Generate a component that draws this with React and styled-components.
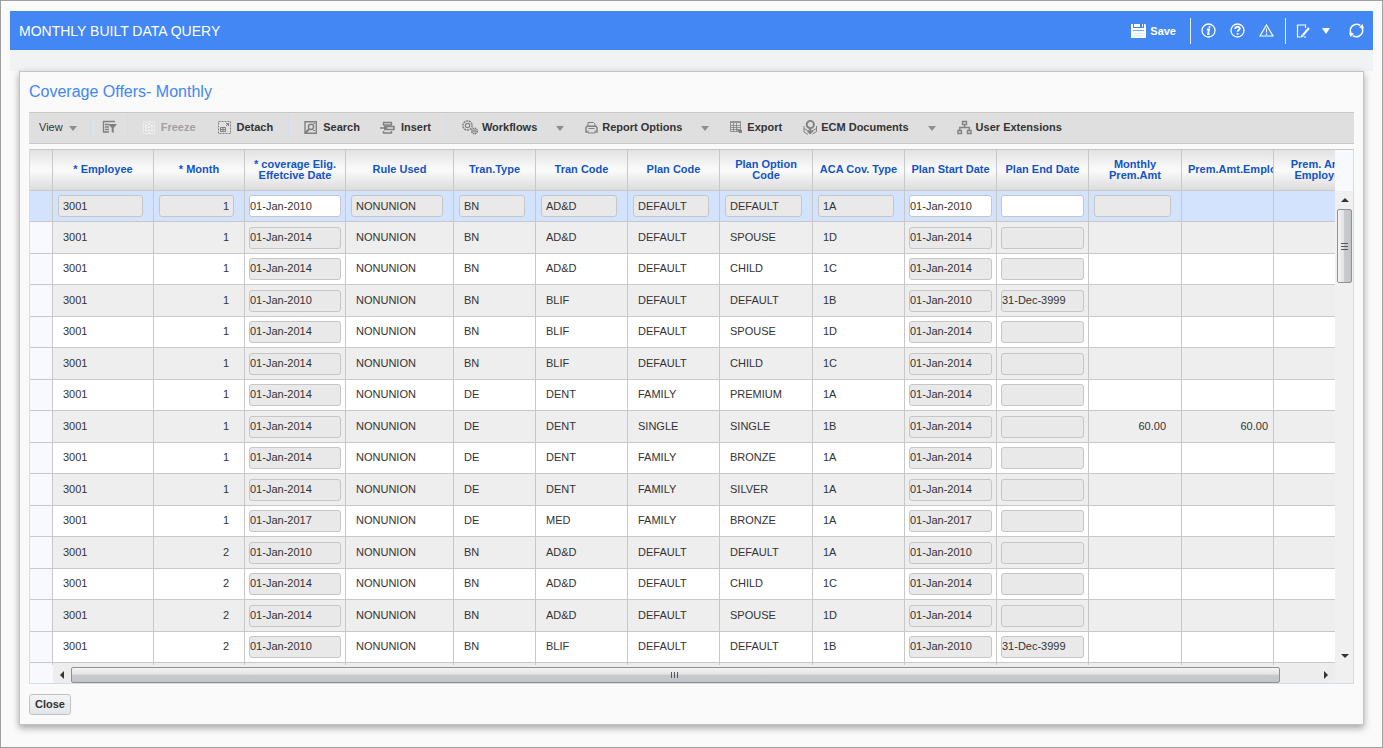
import React from 'react';
import styled, { createGlobalStyle, css } from 'styled-components';

const GlobalStyle = createGlobalStyle`
  *, *::before, *::after { box-sizing: border-box; }
  body {
    margin: 0;
    background: #fafafa;
    color: #333;
    font: 11px/14px "Liberation Sans", Arial, sans-serif;
  }
  button, input { font: inherit; color: inherit; }
`;

const Frame = styled.div`
  min-height: 100vh;
  padding: 10px 9px 20px;
  border: 1px solid #a0a0a0;
`;

const Banner = styled.header`
  display: flex;
  align-items: center;
  height: 39px;
  padding: 0 9px;
  background: #4387f4;
  color: #fff;
`;

const BannerTitle = styled.h1`
  flex: 1;
  margin: 0;
  font-size: 14px;
  line-height: 20px;
  font-weight: 400;
`;

const BannerGroup = styled.div`
  display: flex;
  align-items: center;
  gap: ${(p) => p.$gap || 14}px;
  height: 26px;
  padding: 0 ${(p) => p.$end || 11}px 0 10px;
  border-left: ${(p) => (p.$divided ? '1px solid #e6effd' : '0')};
  &:last-child { padding-right: 0; }
`;

const SplitButton = styled.div`
  display: flex;
  align-items: center;
  gap: 12px;
`;

const BannerButton = styled.button`
  display: flex;
  align-items: center;
  gap: 4px;
  padding: 0;
  border: 0;
  background: none;
  color: #fff;
  font-weight: 700;
  svg { display: block; }
`;

const Main = styled.main`
  padding: 21px 9px 0;
  background: linear-gradient(#f1f2f4 21px, transparent 21px);
`;

const Panel = styled.section`
  padding: 10px 9px 9px;
  border: 1px solid #c4c4c4;
  background: #fafafa;
  box-shadow: 0 3px 7px rgba(0, 0, 0, 0.35);
`;

const PanelTitle = styled.h2`
  margin: 0 0 10px;
  color: #4387f4;
  font-size: 16px;
  line-height: 20px;
  font-weight: 400;
`;

const Toolbar = styled.div`
  display: flex;
  align-items: center;
  height: 32px;
  margin-bottom: 5px;
  padding: 0 10px 2px;
  border: solid #c8c8c8;
  border-width: 1px 0;
  background: #dfdfdf;
`;

const ToolGroup = styled.div`
  display: flex;
  align-items: center;
  height: 24px;
  gap: ${(p) => p.$gap || 22}px;
  padding: 0 ${(p) => p.$end || 0}px 0 ${(p) => p.$start || 0}px;
  border-left: ${(p) => (p.$start ? '1px solid #d3dde6' : '0')};
`;

const ToolButton = styled.button`
  display: flex;
  align-items: center;
  gap: ${(p) => p.$gap || 6}px;
  padding: 0;
  border: 0;
  background: none;
  color: #333;
  font-weight: ${(p) => (p.$plain ? 400 : 700)};
  white-space: nowrap;
  &:disabled { color: #a0a0a0; }
  svg { display: block; color: #808080; }
  &:disabled svg { color: #f0f0f0; }
`;

const Caret = styled.span`
  border: 4px solid transparent;
  border-top: 5px solid #8b8f92;
  border-bottom: 0;
  margin: 3px 0 0 ${(p) => p.$space || 0}px;
`;

const Grid = styled.div`
  display: grid;
  grid-template-columns: minmax(0, 1fr) 18px;
  grid-template-rows: 515px 18px;
  border: 1px solid #d5dde5;
  border-top-color: #c8c8c8;
`;

const Viewport = styled.div`
  overflow: hidden;
`;

const Table = styled.table`
  table-layout: fixed;
  width: 1336px;
  border-collapse: separate;
  border-spacing: 0;
`;

const HeadCell = styled.th`
  height: 41px;
  padding: ${(p) => (p.$clip ? '0 0 1px 6px' : '0 4px 1px')};
  overflow: hidden;
  border: solid #c8c8c8;
  border-width: 0 1px 1px 0;
  background: linear-gradient(#e2e2e2, #fbfbfb 50%, #dcdcdc);
  color: #1254c4;
  line-height: 11px;
  font-weight: 700;
  text-align: ${(p) => (p.$clip ? 'left' : 'center')};
  white-space: pre;
`;

const cellPadding = (p) => {
  if (p.$boxed) return '0 10px 0 5px';
  if (p.$kind === 'date') return '0 4px';
  if (p.$kind === 'total') return '0 5px 2px';
  return '0 15px 2px 10px';
};

const BodyCell = styled.td`
  height: inherit;
  padding: ${cellPadding};
  border: solid #c8c8c8;
  border-width: 0 1px 1px 0;
  text-align: ${(p) => (p.$num ? 'right' : 'left')};
  white-space: nowrap;
`;

const Field = styled.input`
  display: block;
  width: 100%;
  height: 22px;
  padding: ${(p) => (p.$date ? '0 0 2px' : '0 4px')};
  border: 1px solid #c6c6c6;
  border-radius: 3px;
  background: ${(p) => (p.readOnly ? '#e9e9e9' : '#fff')};
  text-align: ${(p) => (p.$num ? 'right' : 'left')};
  outline: 0;
`;

const Row = styled.tr`
  height: 31px;
  background: #fff;
  &:nth-child(even) { height: 32px; background: #eee; }
  td:first-child { background: #f7f9fe; padding: 0; }
  ${(p) => p.$selected && css`
    &, td:first-child { background: #d3e3fd; }
    ${Field} { padding-bottom: 0; }
  `}
`;

const VScroll = styled.div`
  display: flex;
  flex-direction: column;
  padding: 41px 0 0 2px;
  background: linear-gradient(#f7f9fe 41px, #f0f0f0 41px);
`;

const HScroll = styled.div`
  display: flex;
  padding: 2px 0 0 23px;
  background: linear-gradient(90deg, #f7f9fe 23px, #ededed 23px);
`;

const ScrollCorner = styled.div`
  background: #f0f0f0;
`;

const ScrollArrow = styled.button`
  display: flex;
  align-items: center;
  justify-content: center;
  flex: none;
  width: ${(p) => (p.$wide ? 18 : 15)}px;
  height: ${(p) => (p.$wide ? 16 : 18)}px;
  padding: 0;
  border: 0;
  background: none;
`;

const ScrollTrack = styled.div`
  display: flex;
  flex: 1;
  flex-direction: ${(p) => (p.$vertical ? 'column' : 'row')};
`;

const ScrollThumb = styled.div`
  display: flex;
  align-items: center;
  justify-content: center;
  border: 1px solid #8f9093;
  border-radius: 2px;
  ${(p) => (p.$vertical
    ? css`width: 15px; height: 17%; background: linear-gradient(90deg, #f4f4f4, #e2e2e4 45%, #c9cacd 50%, #c3c4c8);`
    : css`width: 97%; height: 16px; background: linear-gradient(#f4f4f4, #e2e2e4 45%, #c9cacd 50%, #c3c4c8);`)}
`;

const CloseButton = styled.button`
  display: block;
  height: 21px;
  margin-top: 10px;
  padding: 0 5px 1px;
  border: 1px solid #c0c3c6;
  border-radius: 3px;
  background: linear-gradient(#f3f4f6, #e2e6ea);
  font-weight: 700;
`;

const Svg = ({ w = 14, h = w, children, ...rest }) => (
  <svg width={w} height={h} viewBox={`0 0 ${w} ${h}`} fill="none" stroke="currentColor" aria-hidden="true" {...rest}>
    {children}
  </svg>
);

const SaveIcon = () => (
  <Svg w={15} h={14} stroke="none" fill="currentColor">
    <path d="M0 0h2v4h11V0h1l1 1v13H0zM3 0h6v3H3zM11 0h1v3h-1z" />
    <path d="M2 6.500h11" stroke="#7cabf7" />
    <path d="M3 9.500h9M3 11.500h9" stroke="#dbe8fd" />
  </Svg>
);
const InfoIcon = () => (
  <Svg w={15}>
    <circle cx="7.500" cy="7.500" r="6.500" strokeWidth="1.300" />
    <path d="M6 6.500h2l-1 4.500h1.500" strokeWidth="1.800" />
    <circle cx="8.500" cy="4" r="1" fill="currentColor" stroke="none" />
  </Svg>
);
const HelpIcon = () => (
  <Svg w={15}>
    <circle cx="7.500" cy="7.500" r="6.500" strokeWidth="1.300" />
    <path d="M5.200 6c0-3 4.600-2.800 4.600-.4 0 1.500-2.200 1.500-2.200 3.200M7.600 10v1.800" strokeWidth="1.800" />
  </Svg>
);
const WarnIcon = () => (
  <Svg w={15} h={13}>
    <path d="M7.500 1 14 12H1zM7.500 4.500v4M7.500 9.500V11" strokeWidth="1.200" />
  </Svg>
);
const EditIcon = () => (
  <Svg w={14}>
    <path d="M9.500 4V1h-8v12h3" strokeWidth="1.200" />
    <path d="m13 4-6 7" strokeWidth="2" />
    <path d="m4.500 13.800 1-3.500 2.500 2z" fill="currentColor" stroke="none" />
    <path d="M8 13h2" />
  </Svg>
);
const DropIcon = () => (
  <Svg w={8} h={6} stroke="none" fill="currentColor"><path d="M0 0h8L4 6z" /></Svg>
);
const RefreshIcon = () => (
  <Svg w={15}>
    <path d="M2.600 11.200A6.200 6.200 0 0 1 5.200 1.700a6.200 6.200 0 0 1 6 .7M12.400 3.800a6.200 6.200 0 0 1-2.600 9.500 6.200 6.200 0 0 1-6-.7" strokeWidth="1.500" />
    <path d="M0 9.500 5 10.500 1.500 14zM15 5.500l-5-1L13.500 1z" fill="currentColor" stroke="none" />
  </Svg>
);

const FilterIcon = () => (
  <Svg w={15}>
    <path d="M1 1.500h12M1.500 1v11M1 12H7M3 4.500h4M3 7h4M3 9.500h4" strokeWidth="1.400" />
    <path d="M6 4h9l-3.300 4v5l-2-1V8z" fill="currentColor" stroke="none" />
  </Svg>
);
const FreezeIcon = () => (
  <Svg w={12} h={13}>
    <path d="M.5 1v11.500h11V1M0 1h12" stroke="#ececec" />
    <path d="M2 4.500h2M2 7h2M2 9.500h2M8 4.500h2M8 7h2M8 9.500h2" stroke="#fff" />
    <path d="M6 2v10" stroke="#fff" strokeDasharray="2 1" />
  </Svg>
);
const DetachIcon = () => (
  <Svg w={13}>
    <path d="M.5.5h12v12H.5z" strokeDasharray="2 1" />
    <path d="M2.500 6.500h5v4h-5zM2.500 8.500h5M5 6.500v4M8 5l2.500-2.500M8 2.500h2.500V5" />
  </Svg>
);
const SearchIcon = () => (
  <Svg w={13}>
    <path d="M1 .7h11.300v11.600H1z" strokeWidth="1.400" />
    <circle cx="7" cy="5.800" r="2.600" strokeWidth="1.500" />
    <path d="m5 8-4 4.500" strokeWidth="2" />
    <path d="M9 9.500h2M9.500 2.500H11" />
  </Svg>
);
const InsertIcon = () => (
  <Svg w={15} h={13}>
    <path d="M3 1.500h9M3.500 1v3h8V1" strokeWidth="1.400" />
    <path d="M5 5.500h9v3H5M0 7h5" strokeWidth="1.500" />
    <path d="m4 4.500 4 2.500-4 2.500z" fill="currentColor" stroke="none" />
    <path d="M3.500 10v2h8v-2" strokeWidth="1.400" />
  </Svg>
);
const GearsIcon = () => (
  <Svg w={16} h={15}>
    <circle cx="5.500" cy="5.500" r="4.600" strokeDasharray="2 .8" strokeWidth="1.500" />
    <circle cx="5.500" cy="5.500" r="2.200" strokeWidth="1.200" />
    <circle cx="12.500" cy="11" r="2.700" strokeDasharray="1.500 .6" strokeWidth="1.700" />
    <circle cx="12.500" cy="11" r="1" />
  </Svg>
);
const PrinterIcon = () => (
  <Svg w={13}>
    <path d="M3 5V1.500h5.500L10 3v2M3 9.500v2.500h7V9.500M3.500 7.500h6" />
    <path d="M2.500 11H1V6.500l1-1.200h9l1 1.200V11h-1.500" strokeWidth="1.400" />
  </Svg>
);
const ExportIcon = () => (
  <Svg w={13} h={12}>
    <path d="M.5.500h10v10H.5zM0 1.500h11M.5 4.500h10M.5 6.500h10M.5 8.500h7M3.500 2v8.500M6.500 2v8.500" strokeWidth=".8" />
    <path d="M6.500 7.500 12 9v3H9z" fill="currentColor" stroke="none" />
  </Svg>
);
const EcmIcon = () => (
  <Svg w={14} h={15}>
    <circle cx="7.300" cy="4.500" r="3.600" strokeWidth="1.900" />
    <path d="M7.200 8v6M4.500 10.500 7 13l3-2.500" strokeWidth="1.800" />
    <path d="M1 6v6l4 2.500M13.500 6v5.500l-4 2.500M1 8.500l3.500 2M13.500 8.500l-4 2" />
  </Svg>
);
const TreeIcon = () => (
  <Svg w={15}>
    <path d="M5.500 1.500h4v3h-4zM1 10.500h3.500v3H1zM10.500 10.500H14v3h-3.500zM7.500 5v2.500M2.800 10V7.500h9.500V10" strokeWidth="1.400" />
  </Svg>
);
const ARROWS = { up: 'M0 5h8L4 1z', down: 'M0 1h8L4 5z', left: 'M5 0v8L1 4z', right: 'M1 0v8l4-4z' };
const Arrow = ({ dir }) => {
  const tall = dir === 'left' || dir === 'right';
  return <Svg w={tall ? 6 : 8} h={tall ? 8 : 6} stroke="none" fill="#333"><path d={ARROWS[dir]} /></Svg>;
};
const Grip = ({ vertical }) => (
  <Svg w={8} stroke="#55585c"><path d={vertical ? 'M0 1.500h7M0 4.500h7M0 7.500h7' : 'M.5 1v6M3.500 1v6M6.500 1v6'} /></Svg>
);

const COLUMNS = [
  { width: 23, label: '' },
  { width: 101, label: '* Employee' },
  { width: 91, label: '* Month', num: true },
  { width: 101, label: '* coverage Elig.\nEffetcive Date', kind: 'date', editable: true },
  { width: 108, label: 'Rule Used' },
  { width: 82, label: 'Tran.Type' },
  { width: 92, label: 'Tran Code' },
  { width: 92, label: 'Plan Code' },
  { width: 93, label: 'Plan Option\nCode' },
  { width: 92, label: 'ACA Cov. Type' },
  { width: 92, label: 'Plan Start Date', kind: 'date', editable: true },
  { width: 92, label: 'Plan End Date', kind: 'date', editable: true },
  { width: 93, label: 'Monthly\nPrem.Amt', num: true },
  { width: 92, label: 'Prem.Amt.Employee', num: true, kind: 'total', clip: true },
  { width: 92, label: 'Prem. Amt.\nEmployer', num: true, kind: 'total' },
];

const ROWS = [
  ['1', '01-Jan-2010', 'BN', 'AD&D', 'DEFAULT', 'DEFAULT', '1A'],
  ['1', '01-Jan-2014', 'BN', 'AD&D', 'DEFAULT', 'SPOUSE', '1D'],
  ['1', '01-Jan-2014', 'BN', 'AD&D', 'DEFAULT', 'CHILD', '1C'],
  ['1', '01-Jan-2010', 'BN', 'BLIF', 'DEFAULT', 'DEFAULT', '1B', '31-Dec-3999'],
  ['1', '01-Jan-2014', 'BN', 'BLIF', 'DEFAULT', 'SPOUSE', '1D'],
  ['1', '01-Jan-2014', 'BN', 'BLIF', 'DEFAULT', 'CHILD', '1C'],
  ['1', '01-Jan-2014', 'DE', 'DENT', 'FAMILY', 'PREMIUM', '1A'],
  ['1', '01-Jan-2014', 'DE', 'DENT', 'SINGLE', 'SINGLE', '1B', '', '60.00', '60.00'],
  ['1', '01-Jan-2014', 'DE', 'DENT', 'FAMILY', 'BRONZE', '1A'],
  ['1', '01-Jan-2014', 'DE', 'DENT', 'FAMILY', 'SILVER', '1A'],
  ['1', '01-Jan-2017', 'DE', 'MED', 'FAMILY', 'BRONZE', '1A'],
  ['2', '01-Jan-2010', 'BN', 'AD&D', 'DEFAULT', 'DEFAULT', '1A'],
  ['2', '01-Jan-2014', 'BN', 'AD&D', 'DEFAULT', 'CHILD', '1C'],
  ['2', '01-Jan-2014', 'BN', 'AD&D', 'DEFAULT', 'SPOUSE', '1D'],
  ['2', '01-Jan-2010', 'BN', 'BLIF', 'DEFAULT', 'DEFAULT', '1B', '31-Dec-3999'],
].map(([month, date, type, code, plan, option, aca, end = '', prem = '', total = '']) => [
  '', '3001', month, date, 'NONUNION', type, code, plan, option, aca, date, end, prem, total, '',
]);

const LAST_BOXED = 12;

function Cell({ column, value, index, selected }) {
  const date = column.kind === 'date';
  const boxed = selected && !date && index > 0 && index <= LAST_BOXED;
  return (
    <BodyCell $kind={column.kind} $num={column.num} $boxed={boxed}>
      {date || boxed ? (
        <Field
          aria-label={column.label}
          defaultValue={value}
          readOnly={!(selected && column.editable)}
          $date={date}
          $num={column.num}
        />
      ) : value}
    </BodyCell>
  );
}

function DataTable() {
  return (
    <Table>
      <colgroup>
        {COLUMNS.map((c, i) => <col key={i} width={c.width} />)}
      </colgroup>
      <thead>
        <tr>{COLUMNS.map((c, i) => <HeadCell key={i} $clip={c.clip}>{c.label}</HeadCell>)}</tr>
      </thead>
      <tbody>
        {ROWS.map((row, r) => (
          <Row key={r} $selected={r === 0}>
            {row.map((value, i) => (
              <Cell key={i} index={i} column={COLUMNS[i]} value={value} selected={r === 0} />
            ))}
          </Row>
        ))}
        <Row>{COLUMNS.map((c, i) => <BodyCell key={i} />)}</Row>
      </tbody>
    </Table>
  );
}

export default function App() {
  return (
    <Frame>
      <GlobalStyle />
      <Banner>
        <BannerTitle>MONTHLY BUILT DATA QUERY</BannerTitle>
        <BannerGroup $end={14}>
          <BannerButton><SaveIcon />Save</BannerButton>
        </BannerGroup>
        <BannerGroup $divided>
          <BannerButton aria-label="Information"><InfoIcon /></BannerButton>
          <BannerButton aria-label="Help"><HelpIcon /></BannerButton>
          <BannerButton aria-label="Warnings"><WarnIcon /></BannerButton>
        </BannerGroup>
        <BannerGroup $divided $gap={19}>
          <SplitButton>
            <BannerButton aria-label="Edit"><EditIcon /></BannerButton>
            <BannerButton aria-label="Edit options"><DropIcon /></BannerButton>
          </SplitButton>
          <BannerButton aria-label="Refresh"><RefreshIcon /></BannerButton>
        </BannerGroup>
      </Banner>
      <Main>
        <Panel>
          <PanelTitle>Coverage Offers- Monthly</PanelTitle>
          <Toolbar>
            <ToolGroup $end={13}>
              <ToolButton $plain>View<Caret /></ToolButton>
            </ToolGroup>
            <ToolGroup $start={11} $end={10}>
              <ToolButton aria-label="Query by example"><FilterIcon /></ToolButton>
            </ToolGroup>
            <ToolGroup $start={15} $end={15}>
              <ToolButton disabled><FreezeIcon />Freeze</ToolButton>
              <ToolButton><DetachIcon />Detach</ToolButton>
            </ToolGroup>
            <ToolGroup $start={15} $end={15} $gap={20}>
              <ToolButton><SearchIcon />Search</ToolButton>
              <ToolButton><InsertIcon />Insert</ToolButton>
            </ToolGroup>
            <ToolGroup $start={15} $gap={21}>
              <ToolButton $gap={4}><GearsIcon />Workflows<Caret $space={15} /></ToolButton>
              <ToolButton $gap={4}><PrinterIcon />Report Options<Caret $space={15} /></ToolButton>
              <ToolButton $gap={4}><ExportIcon />Export</ToolButton>
              <ToolButton $gap={4}><EcmIcon />ECM Documents<Caret $space={15} /></ToolButton>
              <ToolButton $gap={4}><TreeIcon />User Extensions</ToolButton>
            </ToolGroup>
          </Toolbar>
          <Grid>
            <Viewport><DataTable /></Viewport>
            <VScroll>
              <ScrollArrow aria-label="Scroll up"><Arrow dir="up" /></ScrollArrow>
              <ScrollTrack $vertical><ScrollThumb $vertical><Grip vertical /></ScrollThumb></ScrollTrack>
              <ScrollArrow aria-label="Scroll down"><Arrow dir="down" /></ScrollArrow>
            </VScroll>
            <HScroll>
              <ScrollArrow $wide aria-label="Scroll left"><Arrow dir="left" /></ScrollArrow>
              <ScrollTrack><ScrollThumb><Grip /></ScrollThumb></ScrollTrack>
              <ScrollArrow $wide aria-label="Scroll right"><Arrow dir="right" /></ScrollArrow>
            </HScroll>
            <ScrollCorner />
          </Grid>
          <CloseButton>Close</CloseButton>
        </Panel>
      </Main>
    </Frame>
  );
}
